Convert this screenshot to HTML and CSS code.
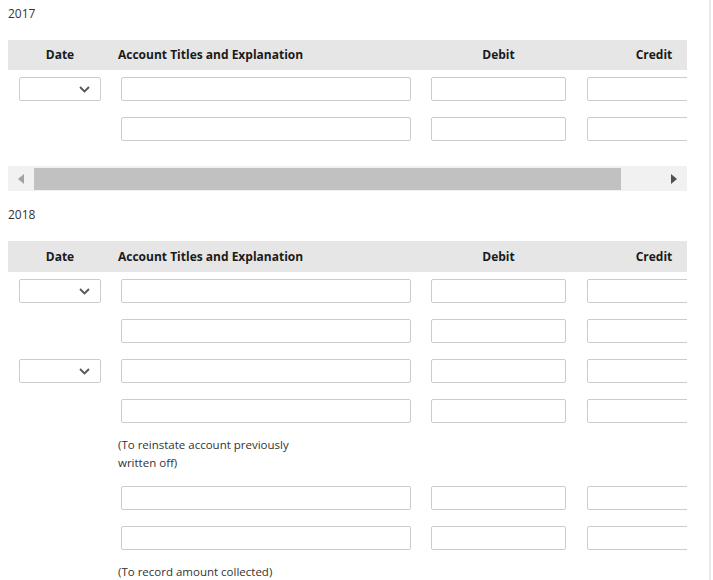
FILE: index.html
```html
<!DOCTYPE html>
<html>
<head>
<meta charset="utf-8">
<link rel="stylesheet" href="styles.css">
</head>
<body>
<div class="page">
  <div class="year">2017</div>
  <div class="scroller">
    <div class="table">
      <div class="row head">
        <div class="c date">Date</div>
        <div class="c acct">Account Titles and Explanation</div>
        <div class="c num">Debit</div>
        <div class="c num">Credit</div>
      </div>
      <div class="row">
        <div class="c date"><div class="sel"><svg width="11" height="7" viewBox="0 0 11 7"><path d="M1 1l4.5 4.5L10 1" fill="none" stroke="#555" stroke-width="1.8"/></svg></div></div>
        <div class="c acct"><div class="inp"></div></div>
        <div class="c num"><div class="inp"></div></div>
        <div class="c num"><div class="inp"></div></div>
      </div>
      <div class="row">
        <div class="c date"></div>
        <div class="c acct"><div class="inp"></div></div>
        <div class="c num"><div class="inp"></div></div>
        <div class="c num"><div class="inp"></div></div>
      </div>
    </div>
  </div>
  <div class="hscroll">
    <span class="arrow left"></span>
    <span class="thumb"></span>
    <span class="arrow right"></span>
  </div>

  <div class="year">2018</div>
  <div class="scroller">
    <div class="table">
      <div class="row head second">
        <div class="c date">Date</div>
        <div class="c acct">Account Titles and Explanation</div>
        <div class="c num">Debit</div>
        <div class="c num">Credit</div>
      </div>
      <div class="row">
        <div class="c date"><div class="sel"><svg width="11" height="7" viewBox="0 0 11 7"><path d="M1 1l4.5 4.5L10 1" fill="none" stroke="#555" stroke-width="1.8"/></svg></div></div>
        <div class="c acct"><div class="inp"></div></div>
        <div class="c num"><div class="inp"></div></div>
        <div class="c num"><div class="inp"></div></div>
      </div>
      <div class="row">
        <div class="c date"></div>
        <div class="c acct"><div class="inp"></div></div>
        <div class="c num"><div class="inp"></div></div>
        <div class="c num"><div class="inp"></div></div>
      </div>
      <div class="row">
        <div class="c date"><div class="sel"><svg width="11" height="7" viewBox="0 0 11 7"><path d="M1 1l4.5 4.5L10 1" fill="none" stroke="#555" stroke-width="1.8"/></svg></div></div>
        <div class="c acct"><div class="inp"></div></div>
        <div class="c num"><div class="inp"></div></div>
        <div class="c num"><div class="inp"></div></div>
      </div>
      <div class="row">
        <div class="c date"></div>
        <div class="c acct"><div class="inp"></div></div>
        <div class="c num"><div class="inp"></div></div>
        <div class="c num"><div class="inp"></div></div>
      </div>
      <div class="row note">
        <div class="c date"></div>
        <div class="c acct">(To reinstate account previously<br>written off)</div>
        <div class="c num"></div>
        <div class="c num"></div>
      </div>
      <div class="row">
        <div class="c date"></div>
        <div class="c acct"><div class="inp"></div></div>
        <div class="c num"><div class="inp"></div></div>
        <div class="c num"><div class="inp"></div></div>
      </div>
      <div class="row">
        <div class="c date"></div>
        <div class="c acct"><div class="inp"></div></div>
        <div class="c num"><div class="inp"></div></div>
        <div class="c num"><div class="inp"></div></div>
      </div>
      <div class="row note">
        <div class="c date"></div>
        <div class="c acct">(To record amount collected)</div>
        <div class="c num"></div>
        <div class="c num"></div>
      </div>
    </div>
  </div>
</div>
</body>
</html>
```
FILE: styles.css
```css
html, body {
  margin: 0;
  padding: 0;
  background: #ffffff;
}
body {
  font-family: "Open Sans", "Liberation Sans", sans-serif;
  font-size: 12px;
  color: #333;
  overflow: hidden;
}
.page {
  padding: 5px 0 0 8px;
  box-sizing: border-box;
  min-height: 580px;
  border-right: 2px solid #e9e9e9;
  width: 711px;
}
.year {
  height: 18px;
  line-height: 18px;
  font-size: 12px;
  color: #333;
  margin-bottom: 17px;
}
.scroller {
  width: 679px;
  overflow: hidden;
}
.table {
  width: 730px;
}
.row {
  display: grid;
  grid-template-columns: 104px 309px 155px 156px;
  height: 40px;
  align-items: start;
}
.row.head {
  background: #e6e6e6;
  height: 30px;
  align-items: center;
  font-weight: bold;
  color: #1a1a1a;
  font-size: 12px;
}
.row.head.second {
  height: 31px;
}
.row.head .c {
  line-height: 30px;
}
.row.head .date,
.row.head .num {
  text-align: center;
}
.row.head .acct {
  padding-left: 6px;
}
.c {
  box-sizing: border-box;
}
.row:not(.head):not(.note) .c {
  padding-top: 7px;
}
.row .date .sel {
  margin-left: 11px;
  width: 82px;
  height: 24px;
  box-sizing: border-box;
  border: 1px solid #cccccc;
  border-radius: 2px;
  display: flex;
  align-items: center;
  justify-content: flex-end;
  padding-right: 10px;
}
.row .acct .inp {
  margin-left: 9px;
  width: 290px;
}
.row .num .inp {
  margin-left: 10px;
  width: 135px;
}
.row .num:last-child .inp {
  margin-left: 11px;
}
.inp {
  height: 24px;
  box-sizing: border-box;
  border: 1px solid #cccccc;
  border-radius: 2px;
  background: #fff;
}
.row.note {
  height: auto;
  padding: 4px 0 7px;
}
.row.note .acct {
  padding-left: 6px;
  line-height: 18px;
  font-size: 11.5px;
  color: #333;
}
.hscroll {
  margin-top: 16px;
  width: 679px;
  height: 25px;
  background: #f1f1f1;
  display: flex;
  align-items: center;
  margin-bottom: 15px;
}
.thumb {
  margin-left: 10px;
  width: 587px;
  height: 22px;
  background: #c1c1c1;
}
.arrow {
  width: 0;
  height: 0;
  border-top: 5px solid transparent;
  border-bottom: 5px solid transparent;
}
.arrow.left {
  margin-left: 10px;
  border-right: 6px solid #a3a3a3;
}
.arrow.right {
  margin-left: 50px;
  border-left: 6px solid #505050;
}
```
